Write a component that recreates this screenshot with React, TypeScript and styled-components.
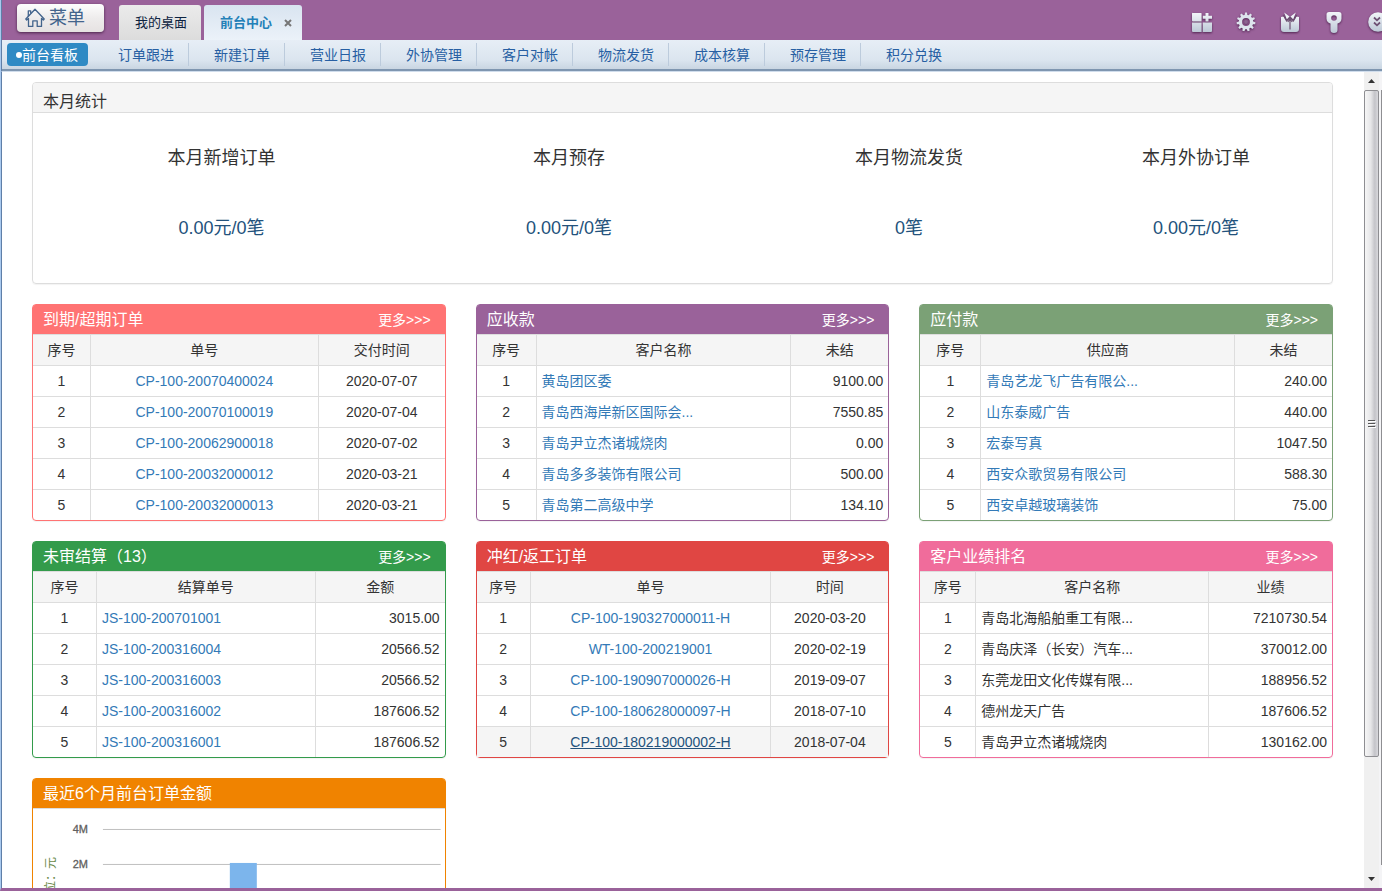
import React from 'react';
import styled, { createGlobalStyle } from 'styled-components';

const PURPLE = '#9a629a';

const GlobalStyle = createGlobalStyle`
  * { box-sizing: border-box; }
  body {
    margin: 0;
    font-family: "Liberation Sans", "Noto Sans CJK SC", sans-serif;
    font-size: 14px;
    line-height: 20px;
    color: #333;
    background: #fff;
  }
  a { color: #337ab7; text-decoration: none; }
  button { font: inherit; border: 0; padding: 0; cursor: pointer; background: none; }
`;

const Frame = styled.div`
  height: 100vh;
  display: flex;
  flex-direction: column;
  overflow: hidden;
  border-left: 1px solid #a9c9ee;
  border-bottom: 3px solid ${PURPLE};
`;

const TopBar = styled.header`
  flex: none;
  height: 40px;
  display: flex;
  align-items: flex-start;
  padding-left: 15px;
  overflow: hidden;
  background: ${PURPLE};
  border-left: 1px solid #5f7fa8;
`;

const MenuButton = styled.button`
  display: flex;
  align-items: center;
  gap: 4px;
  width: 87px;
  height: 28px;
  margin: 4px 15px 0 0;
  padding-left: 8px;
  border-radius: 4px;
  font-size: 18px;
  color: #43648c;
  background: linear-gradient(#fdfdfd, #eeecec 50%, #e6e2e2);
  box-shadow: 0 1px 3px rgba(40, 10, 40, 0.7);
`;

const Tabs = styled.div`
  display: flex;
  gap: 3px;
  padding-top: 5px;
`;

const Tab = styled.div<{ $active?: boolean }>`
  display: flex;
  align-items: center;
  gap: 12px;
  height: 35px;
  padding: 0 ${p => (p.$active ? 10 : 14)}px 0 16px;
  border-radius: 3px 3px 0 0;
  background: ${p => (p.$active ? 'linear-gradient(#d9e4f0, #ebf2f9)' : 'linear-gradient(#ebebeb, #dcdcdc)')};
`;

const TabLabel = styled.button<{ $active?: boolean }>`
  font-size: 13px;
  font-weight: ${p => (p.$active ? 700 : 400)};
  color: ${p => (p.$active ? '#2380b8' : '#0d2340')};
`;

const CloseButton = styled.button`
  display: flex;
  width: 8px;
  height: 8px;
`;

const Tools = styled.div`
  display: flex;
  margin-left: auto;
  margin-right: -18px;
`;

const ToolButton = styled.button`
  display: flex;
  align-items: center;
  justify-content: center;
  width: 44px;
  height: 44px;
  filter: drop-shadow(0 1px 1px rgba(50, 10, 50, 0.7));
`;

const NavBar = styled.nav`
  flex: none;
  height: 32px;
  display: flex;
  align-items: flex-start;
  padding: 3px 0 0 5px;
  background: linear-gradient(#e7eef6, #dbe5ef 65%, #c5d2df);
  border-left: 1px solid #5f7fa8;
  border-bottom: 1px solid #d0ddec;
  box-shadow: inset 0 -2px 0 #7f96b0;
`;

const NavActive = styled.a`
  height: 23px;
  margin-right: 5px;
  padding: 1px 10px 0 9px;
  border-radius: 4px;
  color: #fff;
  background: #2f8ac4;
  display: flex;
  align-items: center;
`;

const Dot = styled.span`
  width: 6px;
  height: 6px;
  border-radius: 3px;
  background: #fff;
`;

const NavItem = styled.a`
  width: 96px;
  height: 23px;
  padding: 1px 0 0 25px;
  line-height: 23px;
  color: #275fa3;
  border-right: 1px solid #bccbdc;
  &:last-child { border-right: 0; }
`;

const Main = styled.div`
  flex: 1;
  min-height: 0;
  display: flex;
  border-left: 1px solid #5f7fa8;
`;

const Content = styled.main`
  flex: 1;
  min-width: 0;
  overflow: hidden;
  padding: 10px 31px 0 30px;
`;

const StatsPanel = styled.section`
  margin-bottom: 20px;
  border: 1px solid #ddd;
  border-radius: 4px;
  box-shadow: 0 1px 1px rgba(0, 0, 0, 0.05);
`;

const StatsTitle = styled.h2`
  margin: 0;
  height: 30px;
  padding: 9px 10px 0;
  font-size: 16px;
  font-weight: 400;
  line-height: 20px;
  background: #f5f5f5;
  border-bottom: 1px solid #ddd;
  border-radius: 3px 3px 0 0;
`;

const StatsBody = styled.div`
  display: grid;
  grid-template-columns: 347fr 348fr 332fr 242fr;
  padding: 25px 15px 35px;
`;

const Stat = styled.div`
  display: flex;
  flex-direction: column;
  gap: 30px;
  text-align: center;
  font-size: 18px;
  line-height: 40px;
`;

const StatValue = styled.a`
  color: #23527c;
`;

const Cards = styled.div`
  display: grid;
  grid-template-columns: repeat(3, minmax(0, 1fr));
  gap: 20px 30px;
  align-items: start;
`;

const Card = styled.section<{ $color: string }>`
  border: 1px solid ${p => p.$color};
  border-radius: 4px;
  box-shadow: 0 1px 1px rgba(0, 0, 0, 0.05);
`;

const CardHeader = styled.header<{ $color: string }>`
  display: flex;
  align-items: center;
  justify-content: space-between;
  height: 29px;
  padding: 1px 14px 0 10px;
  color: #fff;
  background: ${p => p.$color};
  border-radius: 2px 2px 0 0;
`;

const CardTitle = styled.h3`
  margin: 0;
  font-size: 16px;
  font-weight: 400;
`;

const MoreLink = styled.a`
  color: #fff;
`;

const Table = styled.table`
  width: 100%;
  table-layout: fixed;
  border-spacing: 0;
`;

const Col = styled.col<{ $share: number }>`
  width: ${p => (p.$share / 412) * 100}%;
`;

const Th = styled.th`
  height: 31px;
  padding: 0 5px;
  font-weight: 400;
  background: #f5f5f5;
  border-top: 1px solid #ddd;
  & + & { border-left: 1px solid #ddd; }
`;

const Td = styled.td<{ $align: string }>`
  height: 31px;
  padding: 0 5px;
  text-align: ${p => p.$align};
  white-space: nowrap;
  border-top: 1px solid #ddd;
  & + & { border-left: 1px solid #ddd; }
`;

const Row = styled.tr<{ $hovered?: boolean }>`
  background: ${p => (p.$hovered ? '#f5f5f5' : 'transparent')};
  a {
    ${p => p.$hovered && 'color: #23527c; text-decoration: underline;'}
  }
`;

const ChartBox = styled.div`
  border-top: 1px solid #ddd;
  height: 200px;
  svg { display: block; width: 100%; height: 100%; }
`;

const Scrollbar = styled.div`
  flex: none;
  width: 15px;
  display: flex;
  flex-direction: column;
  background: #f0f0f0;
`;

const ScrollArrow = styled.button`
  flex: none;
  display: flex;
  align-items: center;
  justify-content: center;
  height: 18px;
`;

const Thumb = styled.div`
  flex: 668;
  display: flex;
  align-items: center;
  justify-content: center;
  border: 1px solid #8e8e92;
  border-radius: 2px;
  background: linear-gradient(90deg, #f6f6f6, #e6e6e8 45%, #c4c4c9 75%, #d8d8dc);
`;

const TrackRest = styled.div`
  flex: 113;
`;

const OuterEdge = styled.div`
  flex: none;
  width: 3px;
  padding: 18px 0 23px 2px;
  background: #f4f4f6;
`;

const OuterThumb = styled.div`
  height: 100%;
  background: #8e8e92;
`;

type CardData = {
  title: string;
  color: string;
  shares: number[];
  heads: string[];
  aligns: string[];
  plain?: boolean;
  hovered?: number;
  rows: string[][];
};

const cards: CardData[] = [
  {
    title: '到期/超期订单',
    color: '#ff7373',
    shares: [57, 228, 127],
    heads: ['序号', '单号', '交付时间'],
    aligns: ['center', 'center', 'center'],
    rows: [
      ['CP-100-20070400024', '2020-07-07'],
      ['CP-100-20070100019', '2020-07-04'],
      ['CP-100-20062900018', '2020-07-02'],
      ['CP-100-20032000012', '2020-03-21'],
      ['CP-100-20032000013', '2020-03-21'],
    ],
  },
  {
    title: '应收款',
    color: '#9a629a',
    shares: [59, 255, 98],
    heads: ['序号', '客户名称', '未结'],
    aligns: ['center', 'left', 'right'],
    rows: [
      ['黄岛团区委', '9100.00'],
      ['青岛西海岸新区国际会...', '7550.85'],
      ['青岛尹立杰诸城烧肉', '0.00'],
      ['青岛多多装饰有限公司', '500.00'],
      ['青岛第二高级中学', '134.10'],
    ],
  },
  {
    title: '应付款',
    color: '#7ba176',
    shares: [60, 254, 98],
    heads: ['序号', '供应商', '未结'],
    aligns: ['center', 'left', 'right'],
    rows: [
      ['青岛艺龙飞广告有限公...', '240.00'],
      ['山东泰威广告', '440.00'],
      ['宏泰写真', '1047.50'],
      ['西安众歌贸易有限公司', '588.30'],
      ['西安卓越玻璃装饰', '75.00'],
    ],
  },
  {
    title: '未审结算（13）',
    color: '#339b4b',
    shares: [63, 219, 130],
    heads: ['序号', '结算单号', '金额'],
    aligns: ['center', 'left', 'right'],
    rows: [
      ['JS-100-200701001', '3015.00'],
      ['JS-100-200316004', '20566.52'],
      ['JS-100-200316003', '20566.52'],
      ['JS-100-200316002', '187606.52'],
      ['JS-100-200316001', '187606.52'],
    ],
  },
  {
    title: '冲红/返工订单',
    color: '#e04643',
    shares: [53, 241, 118],
    heads: ['序号', '单号', '时间'],
    aligns: ['center', 'center', 'center'],
    hovered: 4,
    rows: [
      ['CP-100-190327000011-H', '2020-03-20'],
      ['WT-100-200219001', '2020-02-19'],
      ['CP-100-190907000026-H', '2019-09-07'],
      ['CP-100-180628000097-H', '2018-07-10'],
      ['CP-100-180219000002-H', '2018-07-04'],
    ],
  },
  {
    title: '客户业绩排名',
    color: '#f06c9b',
    shares: [55, 233, 124],
    heads: ['序号', '客户名称', '业绩'],
    aligns: ['center', 'left', 'right'],
    plain: true,
    rows: [
      ['青岛北海船舶重工有限...', '7210730.54'],
      ['青岛庆泽（长安）汽车...', '370012.00'],
      ['东莞龙田文化传媒有限...', '188956.52'],
      ['德州龙天广告', '187606.52'],
      ['青岛尹立杰诸城烧肉', '130162.00'],
    ],
  },
];

const navItems = ['订单跟进', '新建订单', '营业日报', '外协管理', '客户对帐', '物流发货', '成本核算', '预存管理', '积分兑换'];

const stats = [
  ['本月新增订单', '0.00元/0笔'],
  ['本月预存', '0.00元/0笔'],
  ['本月物流发货', '0笔'],
  ['本月外协订单', '0.00元/0笔'],
];

function DataCard({ card }: { card: CardData }) {
  return (
    <Card $color={card.color}>
      <CardHeader $color={card.color}>
        <CardTitle>{card.title}</CardTitle>
        <MoreLink href="#more">更多&gt;&gt;&gt;</MoreLink>
      </CardHeader>
      <Table>
        <colgroup>
          {card.shares.map((s, i) => <Col key={i} $share={s} />)}
        </colgroup>
        <thead>
          <tr>{card.heads.map(h => <Th key={h}>{h}</Th>)}</tr>
        </thead>
        <tbody>
          {card.rows.map(([name, value], i) => (
            <Row key={name} $hovered={card.hovered === i}>
              <Td $align={card.aligns[0]}>{i + 1}</Td>
              <Td $align={card.aligns[1]}>{card.plain ? name : <a href="#detail">{name}</a>}</Td>
              <Td $align={card.aligns[2]}>{value}</Td>
            </Row>
          ))}
        </tbody>
      </Table>
    </Card>
  );
}

function Chart() {
  return (
    <ChartBox>
      <svg viewBox="0 0 412 199" preserveAspectRatio="xMinYMin meet" role="img" aria-label="最近6个月前台订单金额">
        <path d="M70 20.5H408M70 55.5H408M70 90.5H408" stroke="#c0c0c0" />
        <rect x="197" y="54" width="27" height="36" fill="#7cb5ec" />
        <g fontSize="11" fill="#606060" stroke="#606060" strokeWidth="0.3" textAnchor="end">
          <text x="55" y="24">4M</text>
          <text x="55" y="59">2M</text>
        </g>
        <text transform="translate(22 48) rotate(-90)" fontSize="12" fill="#6b8a4a" textAnchor="end">单位：元</text>
      </svg>
    </ChartBox>
  );
}

const steel = 'url(#steel)';

function SteelGradient() {
  return (
    <defs>
      <linearGradient id="steel" x1="0" y1="0" x2="0" y2="1">
        <stop offset="0" stopColor="#f2f5f9" />
        <stop offset="1" stopColor="#bcc8d6" />
      </linearGradient>
    </defs>
  );
}

const gearTeeth = Array.from({ length: 11 }, (_, i) => (i * 360) / 11);

export default function App() {
  return (
    <>
      <GlobalStyle />
      <Frame>
        <TopBar>
          <MenuButton>
            <svg width="20" height="20" viewBox="0 0 20 20" fill="none" stroke="#43648c" strokeWidth="1.3" strokeLinejoin="round">
              <path d="M.8 11 10 1.300 19.200 11l-.9 1-1.800-1.600v8h-4.300v-5.600H7.800v5.600H3.500v-8L1.700 12z" />
              <path d="M3.300 8.200V2.800h2.400v2.800" />
            </svg>
            菜单
          </MenuButton>
          <Tabs>
            <Tab><TabLabel>我的桌面</TabLabel></Tab>
            <Tab $active>
              <TabLabel $active>前台中心</TabLabel>
              <CloseButton aria-label="关闭">
                <svg width="8" height="8" viewBox="0 0 8 8"><path d="M1 1l6 6M7 1L1 7" stroke="#777" strokeWidth="2" /></svg>
              </CloseButton>
            </Tab>
          </Tabs>
          <Tools>
            <ToolButton aria-label="应用">
              <svg width="20" height="20" viewBox="0 0 20 20" fill={steel}>
                <SteelGradient />
                <path d="M1 1h8a.6.6 0 0 1 .6.6V9.500H1a1 1 0 0 1-1-1V1.600A.6.6 0 0 1 1 1zM13.500 1h3v2.800H20v3h-3.500V9.500h-3V6.800h-2.700v-3h2.700zM0 10.600h9.600V20H1a1 1 0 0 1-1-1zM10.700 10.600H20V19a1 1 0 0 1-1 1h-8.300z" />
              </svg>
            </ToolButton>
            <ToolButton aria-label="设置">
              <svg width="20" height="20" viewBox="0 0 20 20">
                {gearTeeth.map(a => (
                  <path key={a} d="M8.500 4 9 .6h2L11.500 4z" fill="#dde4ed" transform={`rotate(${a} 10 10)`} />
                ))}
                <circle cx="10" cy="10" r="5.600" fill="none" stroke="#dde4ed" strokeWidth="3.400" />
                <circle cx="10" cy="10" r="1.900" fill="#8b6490" />
              </svg>
            </ToolButton>
            <ToolButton aria-label="皮肤">
              <svg width="18" height="20" viewBox="0 0 18 20">
                <path d="M0 5 2.500 4.500V17 4.500L3.500 6 5.500 9 9 6l3.500 3 2-3 1-1.500L18 5v12a3 3 0 0 1-3 3H3a3 3 0 0 1-3-3z" fill={steel} />
                <path d="M3.200.4 8.600 4.600 5.800 7.600zM14.800.4 9.400 4.600l2.800 3z" fill="#eef2f7" />
                <path d="M2.300 3 5.600 9 9 5.400l3.400 3.600 3.300-6M9 6v11.500M6.800 10 9 7l2.200 3" fill="none" stroke="#6d5073" strokeWidth="1.200" />
              </svg>
            </ToolButton>
            <ToolButton aria-label="密码">
              <svg width="16" height="21" viewBox="0 0 16 21">
                <path fillRule="evenodd" d="M3 0h10a2.500 2.500 0 0 1 2.500 2.500v4.200C15.500 9.500 13.500 11 11.500 11.500V18a3.500 3 0 0 1-7 0v-6.500C2.500 11 .5 9.500.5 6.700V2.500A2.500 2.500 0 0 1 3 0zm5 3.200a2.800 2.800 0 1 0 0 5.600 2.800 2.800 0 0 0 0-5.600z" fill={steel} />
              </svg>
            </ToolButton>
            <ToolButton aria-label="更多">
              <svg width="20" height="20" viewBox="0 0 20 20">
                <circle cx="10" cy="10" r="9.800" fill={steel} />
                <path d="M6 5.500 9 8.300l3-2.800M6 10.500l3 2.800 3-2.800" fill="none" stroke="#6d5073" strokeWidth="1.800" />
              </svg>
            </ToolButton>
          </Tools>
        </TopBar>
        <NavBar>
          <NavActive href="#board"><Dot />前台看板</NavActive>
          {navItems.map(n => <NavItem key={n} href="#nav">{n}</NavItem>)}
        </NavBar>
        <Main>
          <Content>
            <StatsPanel>
              <StatsTitle>本月统计</StatsTitle>
              <StatsBody>
                {stats.map(([label, value]) => (
                  <Stat key={label}>
                    <span>{label}</span>
                    <StatValue href="#stat">{value}</StatValue>
                  </Stat>
                ))}
              </StatsBody>
            </StatsPanel>
            <Cards>
              {cards.map(c => <DataCard key={c.title} card={c} />)}
              <Card $color="#f08300">
                <CardHeader $color="#f08300"><CardTitle>最近6个月前台订单金额</CardTitle></CardHeader>
                <Chart />
              </Card>
            </Cards>
          </Content>
          <Scrollbar>
            <ScrollArrow aria-label="向上滚动">
              <svg width="7" height="4" viewBox="0 0 7 4"><path d="M0 4 3.500 0 7 4z" fill="#333" /></svg>
            </ScrollArrow>
            <Thumb>
              <svg width="8" height="9" viewBox="0 0 8 9"><path d="M0 1.500h7M0 4.500h7M0 7.500h7" stroke="#555" /><path d="M1 2.500h7M1 5.500h7M1 8.500h7" stroke="#fff" /></svg>
            </Thumb>
            <TrackRest />
            <ScrollArrow aria-label="向下滚动">
              <svg width="7" height="4" viewBox="0 0 7 4"><path d="M0 0 3.500 4 7 0z" fill="#333" /></svg>
            </ScrollArrow>
          </Scrollbar>
          <OuterEdge><OuterThumb /></OuterEdge>
        </Main>
      </Frame>
    </>
  );
}
